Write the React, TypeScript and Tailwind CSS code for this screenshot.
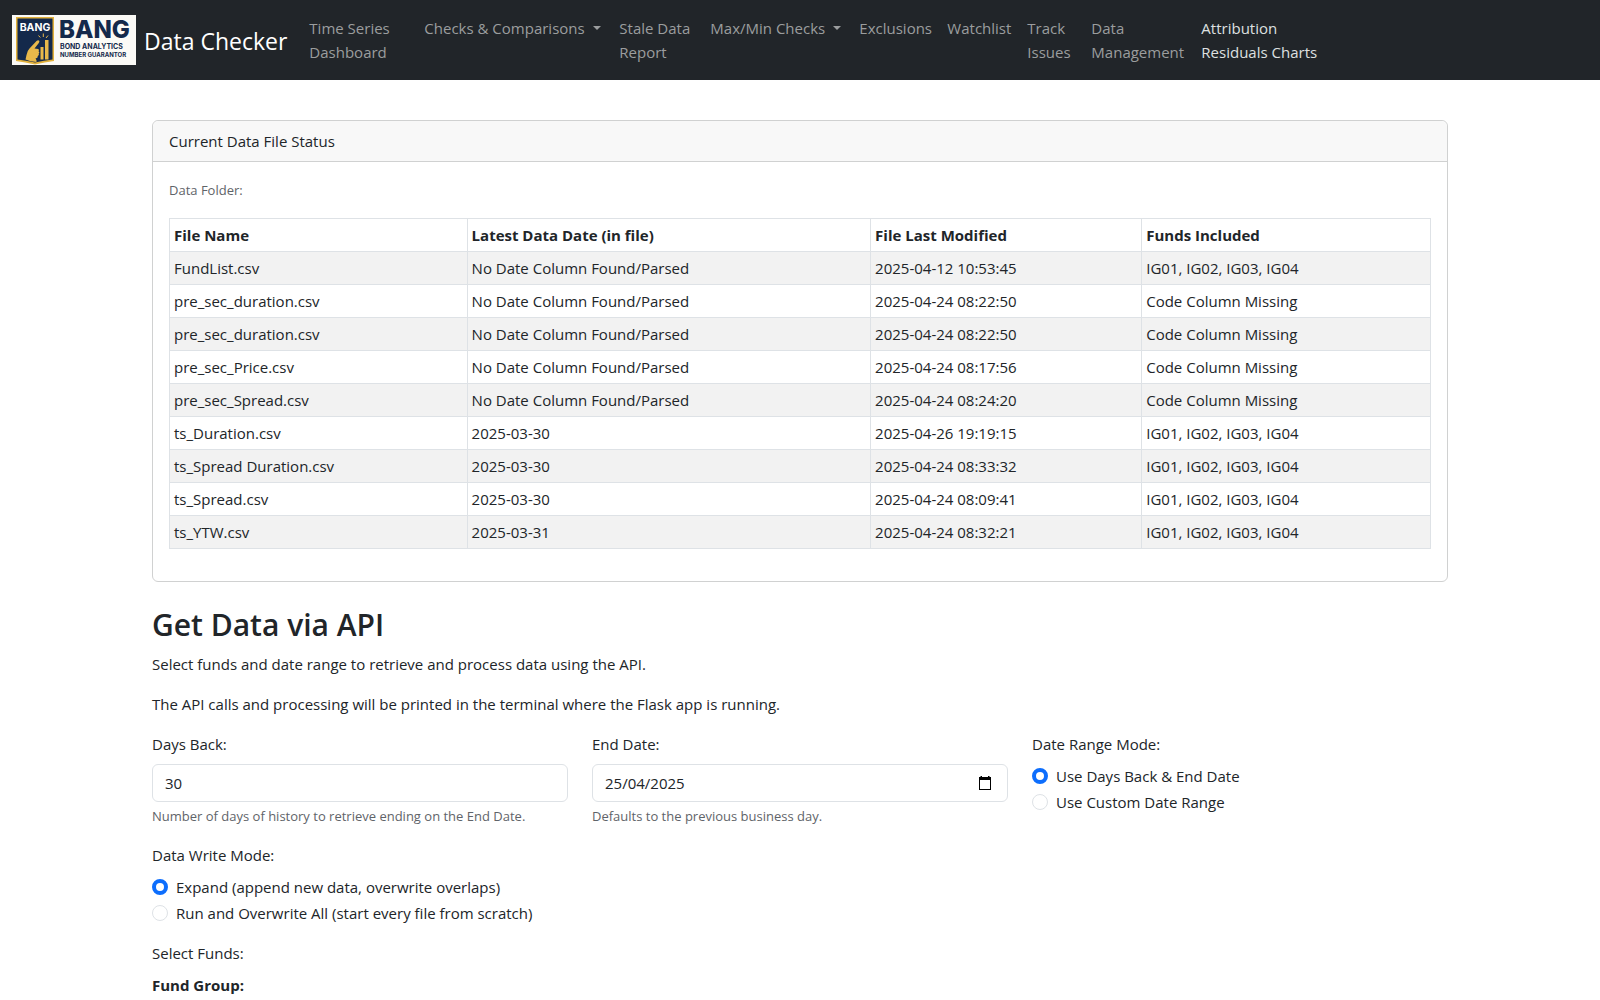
import React from "react";

type NavItem = { label: string; width: string; menu?: boolean; active?: boolean };

const navItems: NavItem[] = [
  { label: "Time Series Dashboard", width: "w-[115px]" },
  { label: "Checks & Comparisons", width: "w-[195px]", menu: true },
  { label: "Stale Data Report", width: "w-[91px]" },
  { label: "Max/Min Checks", width: "w-[149px]", menu: true },
  { label: "Exclusions", width: "w-[88px]" },
  { label: "Watchlist", width: "w-[80px]" },
  { label: "Track Issues", width: "w-[64px]" },
  { label: "Data Management", width: "w-[110px]" },
  { label: "Attribution Residuals Charts", width: "w-[134px]", active: true },
];

const files = [
  ["FundList.csv", "No Date Column Found/Parsed", "2025-04-12 10:53:45", "IG01, IG02, IG03, IG04"],
  ["pre_sec_duration.csv", "No Date Column Found/Parsed", "2025-04-24 08:22:50", "Code Column Missing"],
  ["pre_sec_duration.csv", "No Date Column Found/Parsed", "2025-04-24 08:22:50", "Code Column Missing"],
  ["pre_sec_Price.csv", "No Date Column Found/Parsed", "2025-04-24 08:17:56", "Code Column Missing"],
  ["pre_sec_Spread.csv", "No Date Column Found/Parsed", "2025-04-24 08:24:20", "Code Column Missing"],
  ["ts_Duration.csv", "2025-03-30", "2025-04-26 19:19:15", "IG01, IG02, IG03, IG04"],
  ["ts_Spread Duration.csv", "2025-03-30", "2025-04-24 08:33:32", "IG01, IG02, IG03, IG04"],
  ["ts_Spread.csv", "2025-03-30", "2025-04-24 08:09:41", "IG01, IG02, IG03, IG04"],
  ["ts_YTW.csv", "2025-03-31", "2025-04-24 08:32:21", "IG01, IG02, IG03, IG04"],
];

function Logo() {
  return (
    <svg viewBox="0 0 124 50" className="h-[50px] w-[124px] shrink-0" role="img" aria-label="BANG Bond Analytics Number Guarantor">
      <rect width="124" height="50" fill="#fbfaf6" />
      <path d="M4 2h38v44q-9 1-19 3.500q-10-2.500-19-3.500z" fill="#e3b23c" />
      <path d="M5.500 3.500h35v41q-8.500 1-17.500 3q-9-2-17.500-3z" fill="#14294b" />
      <text x="23" y="16" textAnchor="middle" fontFamily="Inter, sans-serif" fontSize="10.500" fontWeight="700" fill="#fff">BANG</text>
      <path d="M13.500 44.500l1-4.500q.5-4 3-6.500l7-7.500q1.700-1.500 2.700-.3q.6 1-.4 2.300l-4.300 5.500l3.700.5q1.500.8.300 2.200q1.700 1 .2 2.400q.8 1.600-.9 2.400q.3 2-2.300 2.500q1.500 1.500 1 3.500q-6-.2-11-2.500z" fill="#e8b84a" />
      <path d="M28.500 32h3v12.500h-3zM33 25h3.500v19.500h-3.500z" fill="#e8b84a" />
      <path d="M28.300 22.500l-1.800-2M31.300 22v-3.500M34 23l2-2.500" stroke="#e8b84a" strokeWidth="1" />
      <text x="47" y="23" fontFamily="Inter, sans-serif" fontSize="24" fontWeight="800" fill="#14294b">BANG</text>
      <text x="48" y="34" fontFamily="Inter, sans-serif" fontSize="7" fontWeight="700" fill="#14294b">BOND ANALYTICS</text>
      <text x="48" y="42" fontFamily="Inter, sans-serif" fontSize="6" fontWeight="700" fill="#14294b">NUMBER GUARANTOR</text>
    </svg>
  );
}

function CalendarIcon() {
  return (
    <svg viewBox="0 0 14 16" className="h-4 w-3.5" aria-hidden="true">
      <path d="M1 2h12v13H1zM2 5v9h10V5z" fill="#000" fillRule="evenodd" />
      <path d="M2.500 1h1.500v2h-1.500zM10 1h1.500v2h-1.500z" fill="#000" />
    </svg>
  );
}

function Radio({ name, label, checked }: { name: string; label: string; checked?: boolean }) {
  return (
    <label className="flex min-h-6 items-start gap-2">
      <input
        type="radio"
        name={name}
        defaultChecked={checked}
        className="mt-1 size-4 shrink-0 appearance-none rounded-full border border-[#dee2e6] bg-white checked:border-4 checked:border-[#0d6efd]"
      />
      {label}
    </label>
  );
}

const fieldClass = "h-[38px] w-full rounded-md border border-[#dee2e6] bg-white px-3";

export default function App() {
  return (
    <div className="bg-white font-['Open_Sans','Noto_Sans',sans-serif] text-[15px] leading-6 text-[#212529]">
      <nav className="flex min-h-20 items-center bg-[#212529] px-3 py-2">
        <a href="#" className="mr-3.5 flex items-center gap-2 whitespace-nowrap text-[23px] leading-9 text-white">
          <Logo />
          <span className="pt-0.5">Data Checker</span>
        </a>
        <ul className="flex items-start">
          {navItems.map((item) => (
            <li key={item.label} className={`${item.width} shrink-0 px-2 py-2`}>
              {item.menu ? (
                <button type="button" className="flex items-center gap-2 whitespace-nowrap text-[#9b9d9e]">
                  {item.label}
                  <span className="border-x-4 border-t-4 border-x-transparent border-t-current" />
                </button>
              ) : (
                <a href="#" className={item.active ? "block text-[#dee0e0]" : "block text-[#9b9d9e]"}>
                  {item.label}
                </a>
              )}
            </li>
          ))}
        </ul>
      </nav>

      <main className="mx-auto mt-10 max-w-[1320px] px-3">
        <section className="mb-6 rounded-md border border-[#d0d1d1]">
          <div className="rounded-t-md border-b border-[#d0d1d1] bg-[#f8f8f8] px-4 py-2">Current Data File Status</div>
          <div className="p-4">
            <p className="mb-4 text-[13px] text-[#5f6469]">Data Folder:</p>
            <table className="mb-4 w-full table-fixed border-collapse text-left">
              <colgroup>
                <col className="w-[23.6%]" />
                <col className="w-[32%]" />
                <col className="w-[21.5%]" />
                <col className="w-[22.9%]" />
              </colgroup>
              <thead>
                <tr>
                  {["File Name", "Latest Data Date (in file)", "File Last Modified", "Funds Included"].map((h) => (
                    <th key={h} className="border border-[#dee2e6] p-1 font-bold">{h}</th>
                  ))}
                </tr>
              </thead>
              <tbody>
                {files.map((row, i) => (
                  <tr key={i} className="odd:bg-[#f2f2f2]">
                    {row.map((cell, j) => (
                      <td key={j} className="border border-[#dee2e6] p-1">{cell}</td>
                    ))}
                  </tr>
                ))}
              </tbody>
            </table>
          </div>
        </section>

        <h2 className="mb-2 text-[30px] leading-[38px] font-semibold">Get Data via API</h2>
        <p className="mb-4">Select funds and date range to retrieve and process data using the API.</p>
        <p className="mb-4">The API calls and processing will be printed in the terminal where the Flask app is running.</p>

        <form>
          <div className="mb-4 grid grid-cols-3 gap-6">
            <div>
              <label htmlFor="days-back" className="mb-2 block">Days Back:</label>
              <input id="days-back" type="text" inputMode="numeric" defaultValue="30" className={fieldClass} />
              <p className="mt-1 text-[13px] leading-[21px] text-[#5f6469]">Number of days of history to retrieve ending on the End Date.</p>
            </div>
            <div>
              <label htmlFor="end-date" className="mb-2 block">End Date:</label>
              <div className={`${fieldClass} flex items-center`}>
                <input id="end-date" type="text" defaultValue="25/04/2025" className="min-w-0 flex-1 bg-transparent outline-none" />
                <button type="button" aria-label="Choose date" className="mr-[3px]">
                  <CalendarIcon />
                </button>
              </div>
              <p className="mt-1 text-[13px] leading-[21px] text-[#5f6469]">Defaults to the previous business day.</p>
            </div>
            <fieldset>
              <legend className="mb-2">Date Range Mode:</legend>
              <div className="grid gap-0.5">
                <Radio name="range-mode" label="Use Days Back & End Date" checked />
                <Radio name="range-mode" label="Use Custom Date Range" />
              </div>
            </fieldset>
          </div>
          <fieldset className="mb-4">
            <legend className="mb-2">Data Write Mode:</legend>
            <div className="grid gap-0.5">
              <Radio name="write-mode" label="Expand (append new data, overwrite overlaps)" checked />
              <Radio name="write-mode" label="Run and Overwrite All (start every file from scratch)" />
            </div>
          </fieldset>
          <p className="mb-2">Select Funds:</p>
          <p className="font-bold">Fund Group:</p>
        </form>
      </main>
    </div>
  );
}
